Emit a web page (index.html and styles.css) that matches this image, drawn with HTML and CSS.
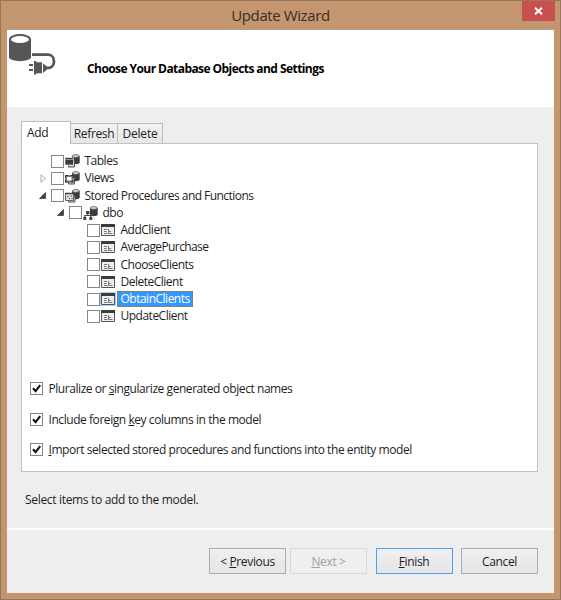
FILE: index.html
```html
<!DOCTYPE html>
<html lang="en">
<head>
<meta charset="utf-8">
<title>Update Wizard</title>
<link rel="stylesheet" href="styles.css">
</head>
<body>
<svg width="0" height="0" class="defs">
  <defs>
    <g id="cyl"><path d="M7 2v6.500c0 2.300 7.700 2.300 7.700 0V2z" fill="#3c3c3c"/><ellipse cx="10.800" cy="2" rx="3.400" ry="1.400" fill="#ddd" stroke="#555" stroke-width=".8"/></g>
    <g id="tables"><use href="#cyl"/><path d="M3.500 7h6v6h-6z" fill="#ccc" stroke="#555"/><path d="M0 3.500h8.500v7.500H0z" fill="#3c3c3c" stroke="#fff" stroke-width=".6"/><path d="M.5 5.500h7.500" stroke="#aaa" stroke-width=".8"/></g>
    <g id="views"><use href="#cyl"/><path d="M3.500 7h6v6h-6z" fill="#ccc" stroke="#555"/><path d="M0 4h8.500v7.500H0z" fill="#777"/><path d="M2 6h4.500v3.500H2z" fill="#fff"/><path d="M.5 6.500v-2H3M6 4.500h2v2M8 9v2H6M3 11H.5V9" fill="none" stroke="#333"/></g>
    <g id="procs"><use href="#cyl"/><path d="M3.500 7h6.500v6H3.500z" fill="#ccc" stroke="#555"/><path d="M.5 4.500h8v7H.5z" fill="#ddd" stroke="#666"/><path d="M0 4.500h9" stroke="#444" stroke-width="1.500"/><path d="M2.200 7.500h1.300M5.500 7h1.300M4 9.500h1M6.500 9.500h1" stroke="#444"/></g>
    <g id="schema"><use href="#cyl"/><path d="M3 5h3.500v3H3zM.3 11h3v3h-3zM6.300 11h3v3h-3z" fill="#444"/><path d="M4.700 7v2.500M1.800 11V9.500h6v1.500" fill="none" stroke="#444" stroke-width="1.200"/></g>
    <g id="proc"><path d="M.5 .5h13v11H.5z" fill="#eee" stroke="#555"/><path d="M0 0h14v3H0z" fill="#3c3c3c"/><path d="M3 5.500h3M3 7.500h2.500M3 9.500h3.500M7.500 5v4.500h4M8 7.500h2" fill="none" stroke="#777"/></g>
    <g id="open"><path d="M6.500 .5v6h-6z" fill="#444" stroke="#222" stroke-width=".6"/></g>
    <g id="closed"><path d="M1 .8l4.500 3.700L1 8.200z" fill="#fff" stroke="#aaa"/></g>
    <g id="check"><path d="M3 6.200l2.600 3L10.200 3.200" fill="none" stroke="#111" stroke-width="2.100"/></g>
  </defs>
</svg>
<div class="window">
  <div class="titlebar">
    <span class="title">Update Wizard</span>
    <div class="close"><svg width="9" height="8" viewBox="0 0 9 8"><path d="M1 .7l7 6.600M8 .7L1 7.300" stroke="#fff" stroke-width="2"/></svg></div>
  </div>
  <div class="client">
    <header class="header">
      <svg class="logo" width="48" height="42" viewBox="0 0 48 42">
        <path d="M0 5.500v17.500c0 5.500 22 5.500 22 0V5.500z" fill="#565658"/>
        <ellipse cx="11" cy="5.500" rx="10" ry="4.400" fill="#fff" stroke="#565658" stroke-width="2"/>
        <path d="M23 20.700h16c8 0 8 13.300 0 13.300h-3" fill="none" stroke="#565658" stroke-width="2.800"/>
        <path d="M25 27h2.300v13.500H25zM27 28.200h6v11H27zM34 29.500l3.500 2.500v4l-3.500 3zM20 30h4v2h-4zM20 35h4v2h-4z" fill="#565658"/>
      </svg>
      <h1 class="heading">Choose Your Database Objects and Settings</h1>
    </header>
    <main class="body">
      <div class="tabs">
        <div class="tab active">Add</div><div class="tab refresh">Refresh</div><div class="tab delete">Delete</div>
      </div>
      <section class="panel">
        <div class="tree">
          <div class="row"><i class="arrow"></i><i class="box"></i><svg class="icon"><use href="#tables"/></svg><span class="label">Tables</span></div>
          <div class="row"><i class="arrow closed"><svg width="7" height="9"><use href="#closed"/></svg></i><i class="box"></i><svg class="icon"><use href="#views"/></svg><span class="label">Views</span></div>
          <div class="row"><i class="arrow"><svg width="7" height="7"><use href="#open"/></svg></i><i class="box"></i><svg class="icon"><use href="#procs"/></svg><span class="label">Stored Procedures and Functions</span></div>
          <div class="row l1"><i class="arrow"><svg width="7" height="7"><use href="#open"/></svg></i><i class="box"></i><svg class="icon"><use href="#schema"/></svg><span class="label">dbo</span></div>
          <div class="row l2"><i class="arrow"></i><i class="box"></i><svg class="icon proc"><use href="#proc"/></svg><span class="label">AddClient</span></div>
          <div class="row l2"><i class="arrow"></i><i class="box"></i><svg class="icon proc"><use href="#proc"/></svg><span class="label tight">AveragePurchase</span></div>
          <div class="row l2"><i class="arrow"></i><i class="box"></i><svg class="icon proc"><use href="#proc"/></svg><span class="label">ChooseClients</span></div>
          <div class="row l2"><i class="arrow"></i><i class="box"></i><svg class="icon proc"><use href="#proc"/></svg><span class="label">DeleteClient</span></div>
          <div class="row l2 selected"><i class="arrow"></i><i class="box"></i><svg class="icon proc"><use href="#proc"/></svg><span class="label">ObtainClients</span></div>
          <div class="row l2"><i class="arrow"></i><i class="box"></i><svg class="icon proc"><use href="#proc"/></svg><span class="label">UpdateClient</span></div>
        </div>
        <div class="options">
          <div class="option"><i class="box"><svg width="13" height="13"><use href="#check"/></svg></i><span>Pluralize or <u>s</u>ingularize generated object names</span></div>
          <div class="option"><i class="box"><svg width="13" height="13"><use href="#check"/></svg></i><span>Include foreign <u>k</u>ey columns in the model</span></div>
          <div class="option"><i class="box"><svg width="13" height="13"><use href="#check"/></svg></i><span><u>I</u>mport selected stored procedures and functions into the entity model</span></div>
        </div>
      </section>
      <p class="hint">Select items to add to the model.</p>
    </main>
    <footer class="footer">
      <div class="btn">&lt; <u>P</u>revious</div>
      <div class="btn disabled"><u>N</u>ext &gt;</div>
      <div class="btn primary"><u>F</u>inish</div>
      <div class="btn">Cancel</div>
    </footer>
  </div>
</div>
</body>
</html>
```
FILE: styles.css
```css
* { box-sizing: border-box; }
body {
  margin: 0;
  font-family: "Open Sans", "Noto Sans", sans-serif;
  font-size: 12px;
  letter-spacing: -0.35px;
  color: #1e1e1e;
}
.defs { position: absolute; }
i { font-style: normal; }
u { text-decoration: underline; text-underline-offset: 1px; text-decoration-thickness: 1px; text-decoration-skip-ink: none; }
.window {
  width: 561px;
  height: 600px;
  background: #c49670;
  border: 1px solid #97765a;
  padding: 0 6px 6px;
  display: flex;
  flex-direction: column;
}
.titlebar { height: 28px; display: flex; justify-content: center; position: relative; }
.title { font-size: 15px; line-height: 28px; color: #3b2d22; letter-spacing: -0.4px; }
.close {
  position: absolute;
  right: -1px;
  top: 0;
  width: 33px;
  height: 20px;
  background: #c75050;
  display: flex;
  align-items: center;
  justify-content: center;
}
.client {
  flex: 1;
  border-top: 1px solid #b0a090;
  background: #eee;
  display: flex;
  flex-direction: column;
}
.header { height: 77px; background: #fff; display: flex; padding: 4px 0 0 2px; }
.logo { flex: none; }
.heading { margin: 26px 0 0 30px; font-size: 12px; line-height: 18px; font-weight: 700; color: #000; letter-spacing: -0.57px; white-space: nowrap; }
.body { flex: 1; padding: 14px 16px 0 14px; }
.tabs { display: flex; align-items: flex-end; height: 22px; }
.tab {
  height: 20px;
  line-height: 20px;
  border: 1px solid #bbbdbf;
  border-bottom: 0;
  border-left: 0;
  text-align: center;
  background: linear-gradient(#f2f2f2, #e6e6e6);
}
.tab.active {
  width: 50px;
  height: 23px;
  line-height: 21px;
  margin-bottom: -1px;
  border-left: 1px solid #bbbdbf;
  background: #fff;
  text-align: left;
  padding-left: 5px;
  z-index: 1;
}
.tab.refresh { width: 47px; }
.tab.delete { width: 45px; letter-spacing: -0.2px; }
.panel {
  height: 329px;
  background: #fff;
  border: 1px solid #bfc3c4;
  padding: 8px 0 0 8px;
  display: flex;
  flex-direction: column;
}
.tree { height: 224px; padding-top: 0.5px; letter-spacing: -0.5px; }
.row { display: flex; align-items: center; height: 17.25px; padding-left: 8px; }
.row.l1 { padding-left: 26px; }
.row.l2 { padding-left: 44px; }
.arrow { width: 13px; height: 17px; display: flex; align-items: center; padding-left: 1px; }
.arrow.closed { padding-left: 2px; }
.box { width: 13px; height: 13px; border: 1px solid #858585; background: #fff; flex: none; display: block; }
.box svg { display: block; margin: -1px; }
.icon { width: 15px; height: 14px; margin: 0 2px 0 1px; flex: none; }
.icon.proc { width: 14px; height: 12px; margin-right: 2px; }
.label { line-height: 16px; padding: 0 2.5px; white-space: nowrap; }
.l2 .label { padding: 0 3.5px; }
.label.tight { letter-spacing: -0.6px; }
.row:nth-child(3) .label { letter-spacing: -0.55px; }
.selected .icon { outline: 1px solid #a8d0f5; background: #cde6ff; }
.selected .label { background: #3399ff; color: #fff; outline: 1px dotted #cc6600; outline-offset: -1px; }
.option { display: flex; align-items: center; height: 30.5px; gap: 5.5px; white-space: nowrap; letter-spacing: -0.44px; }
.options { margin-top: -2.5px; }
.hint { margin: 19px 0 0 4px; line-height: 18px; letter-spacing: -0.32px; }
.footer {
  height: 65px;
  border-top: 2px solid #fff;
  padding: 18px 16px 0 0;
  display: flex;
  justify-content: flex-end;
}
.btn {
  width: 77px;
  height: 26px;
  line-height: 25px;
  border: 1px solid #acacac;
  background: linear-gradient(#f0f0f0, #e5e5e5);
  text-align: center;
}
.btn + .btn { margin-left: 8.5px; }
.btn + .btn.disabled { margin-left: 4px; border-color: #d9d9d9; background: #efefef; color: #a0a0a0; }
.btn.primary { border-color: #4da0f0; }
```
